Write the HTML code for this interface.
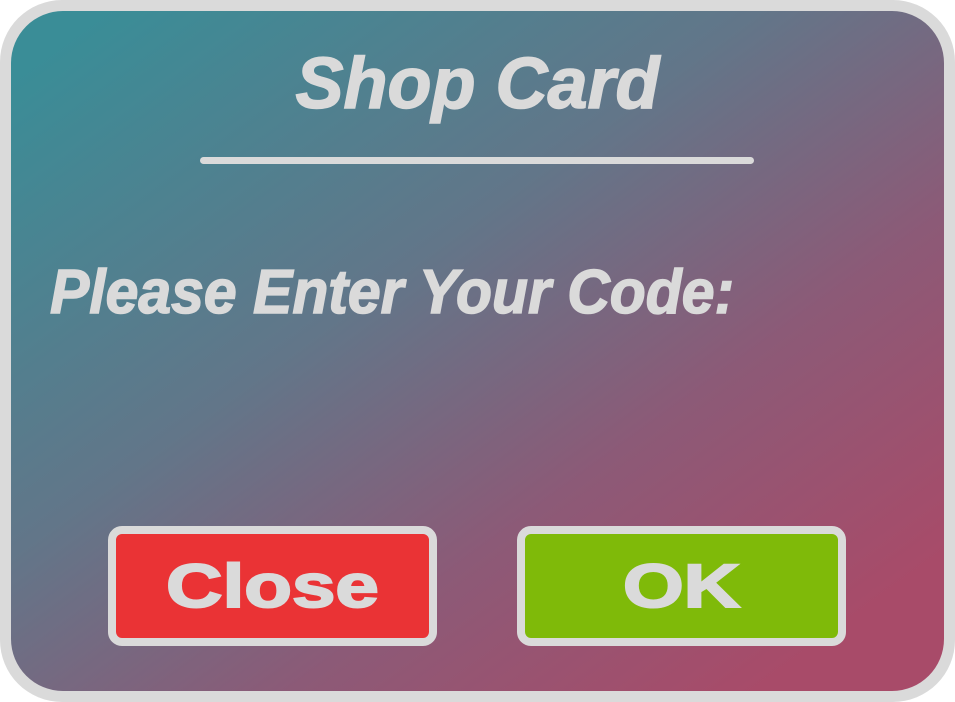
<!DOCTYPE html>
<html><head><style>
html,body{margin:0;padding:0;background:#fff;}
.outer{position:absolute;left:0;top:0;width:955px;height:702px;border-radius:62px;background:#dadada;}
.card{position:absolute;left:11px;top:11px;width:933px;height:680px;border-radius:52px;
background:linear-gradient(to bottom right,#3a8d97 5%,#627689 40%,#8c5a77 65%,#a84b69 90%);overflow:hidden;}
.t{position:absolute;font-family:"Liberation Sans",sans-serif;font-weight:bold;font-style:italic;color:#dadada;white-space:nowrap;-webkit-text-stroke:1.5px #dadada;}
.title{left:0;width:955px;text-align:center;top:44px;font-size:72px;line-height:80px;}
.line{position:absolute;left:200px;top:157px;width:554px;height:7px;border-radius:4px;background:#dadada;}
.prompt{left:50px;top:256px;font-size:62px;line-height:74px;transform-origin:0 0;transform:scaleX(0.95);}
.btn{position:absolute;top:526px;width:313px;height:104px;border:8px solid #dadada;border-radius:14px;}
.btn span{position:absolute;left:0;right:0;top:19px;text-align:center;font-family:"Liberation Sans",sans-serif;font-weight:bold;color:#dadada;-webkit-text-stroke:2px #dadada;font-size:61px;line-height:66px;transform:scaleX(1.28);}
</style></head><body>
<div class="outer"></div>
<div class="card"></div>
<div class="t title">Shop Card</div>
<div class="line"></div>
<div class="t prompt">Please Enter Your Code:</div>
<div class="btn" style="left:108px;background:#ea3335;"><span>Close</span></div>
<div class="btn" style="left:517px;background:#7fba09;"><span>OK</span></div>
</body></html>
